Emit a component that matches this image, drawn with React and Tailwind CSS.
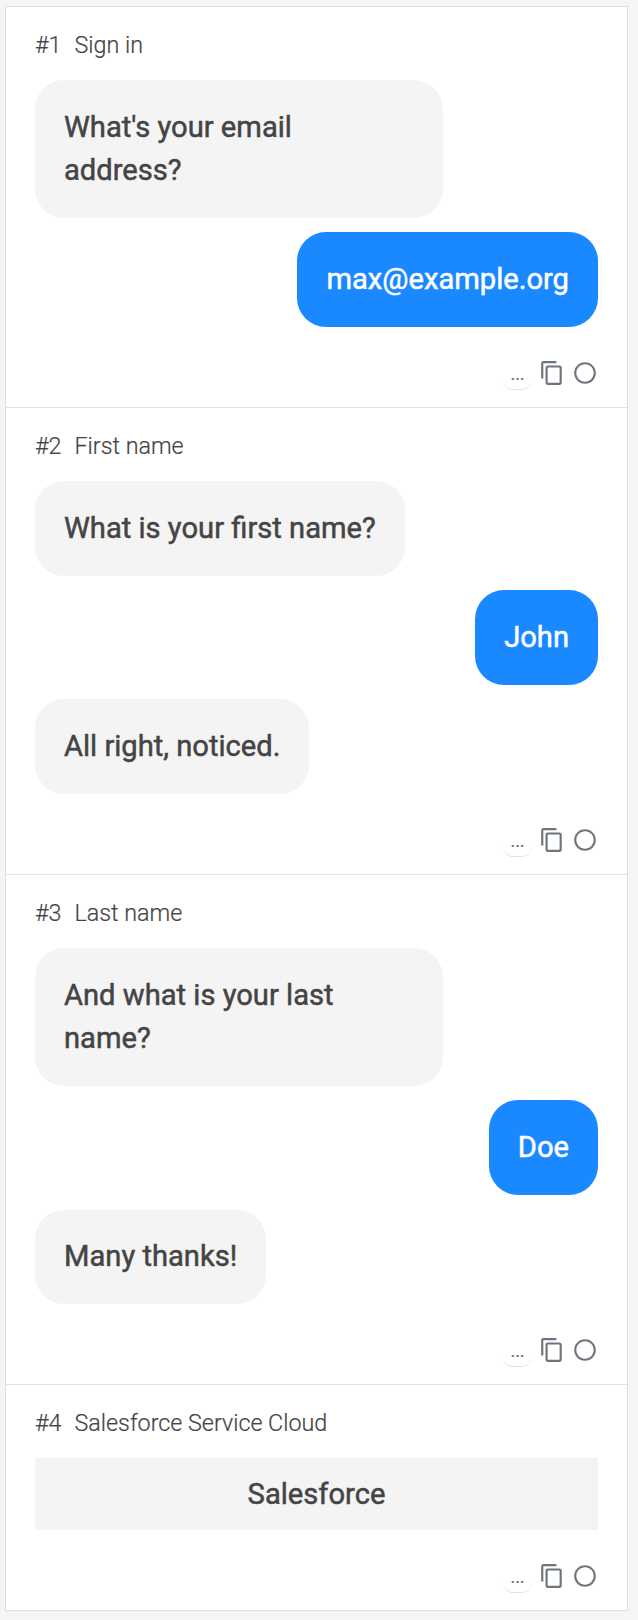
import { MdContentCopy, MdRadioButtonUnchecked } from "react-icons/md";

const steps = [
  {
    title: "Sign in",
    messages: [
      { text: "What's your email address?" },
      { text: "max@example.org", own: true },
    ],
  },
  {
    title: "First name",
    messages: [
      { text: "What is your first name?" },
      { text: "John", own: true },
      { text: "All right, noticed." },
    ],
  },
  {
    title: "Last name",
    messages: [
      { text: "And what is your last name?" },
      { text: "Doe", own: true },
      { text: "Many thanks!" },
    ],
  },
  { title: "Salesforce Service Cloud", banner: "Salesforce" },
];

function Bubble({ text, own }) {
  return (
    <div
      className={
        "max-w-[408px] rounded-[29px] px-[29px] py-[25.8px] " +
        (own ? "self-end bg-[#1a88ff] text-white" : "self-start bg-[#f4f4f4]")
      }
    >
      {text}
    </div>
  );
}

function Actions() {
  return (
    <div className="mt-[29px] flex h-[50.8px] items-start justify-end text-[#6c757d]">
      <button className="mt-[5px] mr-[7px] flex h-[29px] w-[29px] items-center justify-center rounded-[10px] border-b border-[#dee2e6] pb-px text-[17px] leading-none font-medium">
        ...
      </button>
      <MdContentCopy className="mt-[3.5px] mr-[7px] size-[26px]" />
      <MdRadioButtonUnchecked className="mt-[3.5px] size-[26px]" />
    </div>
  );
}

export default function App() {
  return (
    <div className="h-[1620px] bg-[#f5f5f8] pt-[6px] pl-[5px] font-['Roboto',sans-serif] text-[#444]">
      <div className="w-[623px] divide-y divide-[#dee2e6] border border-[#dbdee5] bg-white">
        {steps.map((step, i) => (
          <section key={step.title} className="px-[29px]">
            <h2 className="flex h-[73px] gap-[13px] pt-[21px] text-[23.3px] leading-[35px] font-light [-webkit-text-stroke:0.2px]">
              <span>#{i + 1}</span>
              <span>{step.title}</span>
            </h2>
            <div className="flex flex-col gap-[14.4px] text-[29.15px] leading-[43.2px] font-normal [-webkit-text-stroke:0.5px]">
              {step.messages?.map((m) => <Bubble key={m.text} {...m} />)}
              {step.banner && (
                <div className="bg-[#f4f4f4] py-[14.4px] text-center">{step.banner}</div>
              )}
            </div>
            <Actions />
          </section>
        ))}
      </div>
    </div>
  );
}
